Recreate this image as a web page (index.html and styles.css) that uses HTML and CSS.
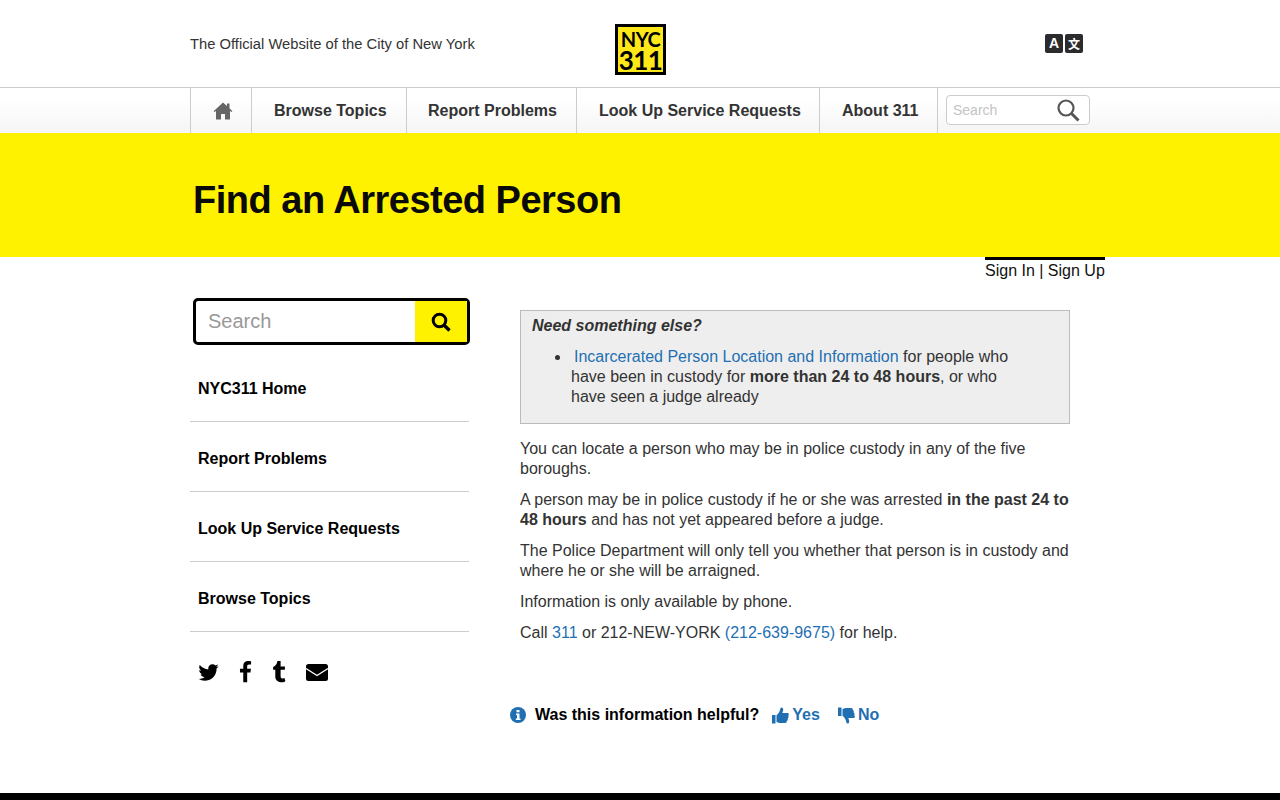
FILE: index.html
```html
<!DOCTYPE html>
<html lang="en">
<head>
<meta charset="utf-8">
<title>Find an Arrested Person</title>
<link rel="stylesheet" href="styles.css">
</head>
<body>
<div class="page">
  <header class="topbar">
    <div class="tagline">The Official Website of the City of New York</div>
    <div class="logo"><span class="logo-nyc">NYC</span><span class="logo-num">311</span></div>
    <div class="translate"><span class="tr-box">A</span><span class="tr-box tr-cjk">文</span></div>
  </header>
  <nav class="navbar">
    <a class="nav-item nav-home"><svg width="20" height="18" viewBox="0 0 20 18"><path fill="#666" d="M10 .5 0.6 9.2l1 0.9L3 9v8.5h5V12h4v5.500h5V9l1.400 1.100 1-.9L16.500 6.300V1.500h-2.500v2.500z"/></svg></a>
    <a class="nav-item nav-browse">Browse Topics</a>
    <a class="nav-item nav-report">Report Problems</a>
    <a class="nav-item nav-lookup">Look Up Service Requests</a>
    <a class="nav-item nav-about">About 311</a>
    <div class="nav-search">
      <span class="nav-search-text">Search</span>
      <svg width="24" height="24" viewBox="0 0 24 24"><circle cx="10" cy="10" r="7.500" fill="none" stroke="#555" stroke-width="2.200"/><path d="M15.500 15.500 22.500 22.500" stroke="#555" stroke-width="3" fill="none"/></svg>
    </div>
  </nav>
  <section class="hero"><h1>Find an Arrested Person</h1></section>
  <div class="account-row"><div class="account">Sign In | Sign Up</div></div>
  <main class="main">
    <aside class="sidebar">
      <div class="side-search">
        <span class="side-search-text">Search</span>
        <span class="side-search-btn"><svg width="20" height="20" viewBox="0 0 20 20"><circle cx="8.500" cy="8.500" r="6.300" fill="none" stroke="#000" stroke-width="3"/><path d="M13 13 18.500 18.500" stroke="#000" stroke-width="3.400" fill="none"/></svg></span>
      </div>
      <ul class="side-menu">
        <li>NYC311 Home</li>
        <li>Report Problems</li>
        <li>Look Up Service Requests</li>
        <li>Browse Topics</li>
      </ul>
      <div class="social">
        <svg class="ic-tw" width="23" height="23" viewBox="0 0 1664 1792"><path d="M1620 408q-67 98-162 167 1 14 1 42 0 130-38 259.500t-115.500 248.500-184.500 210.500-258 146-323 54.500q-271 0-496-145 35 4 78 4 225 0 401-138-105-2-188-64.500t-114-159.500q33 5 61 5 43 0 85-11-112-23-185.500-111.500t-73.500-205.500v-4q68 38 146 41-66-44-105-115t-39-154q0-88 44-163 121 149 294.500 238.500t371.500 99.500q-8-38-8-74 0-134 94.500-228.500t228.500-94.500q140 0 236 102 109-21 205-78-37 115-142 178 92-10 184-50z"/></svg>
        <svg class="ic-fb" width="14" height="23" viewBox="390 0 960 1792"><path d="M1343 12v264h-157q-86 0-116 36t-30 108v189h293l-39 296h-254v759h-306v-759h-255v-296h255v-218q0-186 104-288.500t277-102.500q147 0 228 12z"/></svg>
        <svg class="ic-tu" width="15" height="23" viewBox="320 0 1100 1792"><path d="M1328 1329l80 237q-23 35-111 66t-177 32q-104 2-190.500-26t-142.500-74-95-106-55.500-120-16.500-118v-544h-168v-215q72-26 129-69.500t91-90 58-102 34-99 15-88.500q1-5 4.500-8.500t7.500-3.500h244v424h333v252h-334v518q0 30 6.500 56t22.500 52.500 49.500 41.500 81.500 14q78-2 134-29z"/></svg>
        <svg class="ic-mail" width="22" height="17" viewBox="0 0 22 17"><rect width="22" height="17" rx="2.500"/><path d="M0 4.500 11 11.500 22 4.500" fill="none" stroke="#fff" stroke-width="1.300"/></svg>
      </div>
    </aside>
    <article class="content">
      <div class="callout">
        <div class="callout-title">Need something else?</div>
        <ul class="callout-list">
          <li><a class="link link-first">Incarcerated Person Location and Information</a> for people who have been in custody for <b>more than 24 to 48 hours</b>, or who have seen a judge already</li>
        </ul>
      </div>
      <p>You can locate a person who may be in police custody in any of the five boroughs.</p>
      <p>A person may be in police custody if he or she was arrested <b>in the past 24 to 48 hours</b> and has not yet appeared before a judge.</p>
      <p>The Police Department will only tell you whether that person is in custody and where he or she will be arraigned.</p>
      <p>Information is only available by phone.</p>
      <p>Call <a class="link">311</a> or 212-NEW-YORK <a class="link">(212-639-9675)</a> for help.</p>
      <div class="feedback">
        <svg class="fb-info" width="16" height="16" viewBox="0 0 16 16"><circle cx="8" cy="8" r="8" fill="#1f6fb2"/><path d="M6.500 3h3v2.300h-3zM6 6.500h3.500v5H10.500V13H5.800v-1.500H7V8H6z" fill="#fff"/></svg>
        <span class="fb-q">Was this information helpful?</span>
        <a class="fb-btn fb-yes"><svg width="17" height="17" viewBox="0 0 17 17"><path fill="#1f6fb2" d="M0 8h3.500v8.500H0zM4.500 8.200C6 7 7.500 5 8 3c.3-1.500.6-2.500 1.500-2.500 1.500 0 2 1.500 1.500 3.500L10.300 6H15.500c1.700 0 1.800 2.300.6 2.800.8.800.6 2.200-.4 2.700.4 1 0 2-.9 2.400.2 1.300-.6 2.100-1.800 2.100H9c-1.800 0-3-.6-4.500-1z"/></svg>Yes</a>
        <a class="fb-btn fb-no"><svg width="17" height="17" viewBox="0 0 17 17"><g transform="rotate(180 8.500 8.500) scale(-1 1) translate(-17 0)"><path fill="#1f6fb2" d="M0 8h3.500v8.500H0zM4.500 8.200C6 7 7.500 5 8 3c.3-1.500.6-2.500 1.500-2.500 1.500 0 2 1.500 1.500 3.500L10.300 6H15.500c1.700 0 1.800 2.300.6 2.800.8.800.6 2.200-.4 2.700.4 1 0 2-.9 2.400.2 1.300-.6 2.100-1.800 2.100H9c-1.800 0-3-.6-4.500-1z"/></g></svg>No</a>
      </div>
    </article>
  </main>
  <footer class="footer"></footer>
</div>
</body>
</html>
```

FILE: styles.css
```css
* { box-sizing: border-box; }
html, body { margin: 0; padding: 0; }
body { font-family: "Liberation Sans", Arial, sans-serif; font-size: 16px; line-height: 20px; color: #333; background: #fff; overflow: hidden; }
.page { height: 800px; display: flex; flex-direction: column; }

.topbar { height: 88px; flex: none; border-bottom: 1px solid #ccc; display: flex; align-items: flex-start; padding-left: 190px; }
.tagline { width: 425px; margin-top: 34px; font-size: 14.75px; color: #333; }
.logo { width: 51px; height: 51px; margin-top: 24px; padding-top: 3px; background: #ffe81a; border: 3px solid #000; display: flex; flex-direction: column; align-items: center; font-family: Lato, "Liberation Sans", sans-serif; font-weight: 700; color: #000; }
.logo-nyc { font-size: 20px; line-height: 19px; letter-spacing: -0.5px; }
.logo-num { font-size: 26px; line-height: 23px; letter-spacing: -0.5px; }
.translate { margin-left: 379px; margin-top: 34px; display: flex; gap: 2px; }
.tr-box { width: 18px; height: 19px; border-radius: 2px; background: #2b2b2e; color: #fff; font-weight: 700; font-size: 14px; line-height: 19px; text-align: center; }
.tr-cjk { font-family: "Noto Sans CJK SC", sans-serif; font-size: 12px; }

.navbar { height: 45px; flex: none; background: linear-gradient(#fff 25%, #f5f5f5); display: flex; padding-left: 190px; }
.nav-item { display: flex; align-items: center; padding-left: 22px; border-left: 1px solid #ccc; font-weight: 700; font-size: 16px; color: #333; }
.nav-home { width: 61px; }
.nav-browse { width: 155px; }
.nav-report { width: 170px; padding-left: 21px; }
.nav-lookup { width: 243px; }
.nav-about { width: 119px; border-right: 1px solid #ccc; }
.nav-search { width: 144px; height: 30px; margin: 7px 0 0 8px; border: 1px solid #ccc; border-radius: 4px; background: #fff; display: flex; align-items: center; justify-content: space-between; padding: 0 9px 0 6px; }
.nav-search-text { font-size: 14px; color: #c4c4c4; }

.hero { height: 124px; flex: none; background: #fff200; display: flex; align-items: center; padding: 10px 0 0 193px; }
.hero h1 { margin: 0; font-size: 38px; line-height: 44px; font-weight: 700; color: #0a0a0a; letter-spacing: -0.5px; }

.account-row { flex: none; display: flex; justify-content: flex-end; padding-right: 175px; }
.account { width: 120px; border-top: 3px solid #000; color: #111; line-height: 20px; padding-top: 1px; height: 23px; }

.main { flex: none; display: flex; padding-left: 190px; }
.sidebar { width: 280px; padding-top: 18px; flex: none; }
.side-search { width: 277px; height: 47px; margin-left: 3px; border: 3px solid #000; border-radius: 5px; display: flex; align-items: stretch; justify-content: space-between; }
.side-search-text { font-size: 20px; line-height: 41px; color: #999; padding-left: 12px; }
.side-search-btn { width: 52px; background: #fff200; display: flex; align-items: center; justify-content: center; }
.side-menu { list-style: none; margin: 7px 0 0; padding: 0; width: 279px; }
.side-menu li { height: 70px; border-bottom: 1px solid #ccc; padding: 27px 0 0 8px; font-weight: 700; color: #000; }
.social { display: flex; align-items: center; height: 24px; margin-top: 28px; padding-left: 7px; }
.ic-fb { margin-left: 18px; }
.ic-tu { margin-left: 19px; }
.ic-mail { margin-left: 20px; }

.content { width: 550px; margin-left: 50px; padding-top: 30px; }
.callout { height: 114px; background: #eee; border: 1px solid #bbb; padding: 5px 11px; margin-bottom: 15px; }
.callout-title { font-weight: 700; font-style: italic; }
.callout-list { margin: 11px 0 0; padding: 0 48px 0 39px; }
.link { color: #1f6fb2; }
.link-first { margin-left: 3px; }
.content p { margin: 0 0 11px; }
.feedback { display: flex; align-items: center; margin: 62px 0 0 -10px; height: 20px; }
.fb-q { font-weight: 700; color: #000; margin-left: 9px; }
.fb-btn { display: flex; align-items: center; gap: 3px; font-weight: 700; color: #1f6fb2; }
.fb-yes { margin-left: 13px; }
.fb-no { margin-left: 18px; }

.footer { flex: none; height: 7px; margin-top: auto; background: #000; }
```
